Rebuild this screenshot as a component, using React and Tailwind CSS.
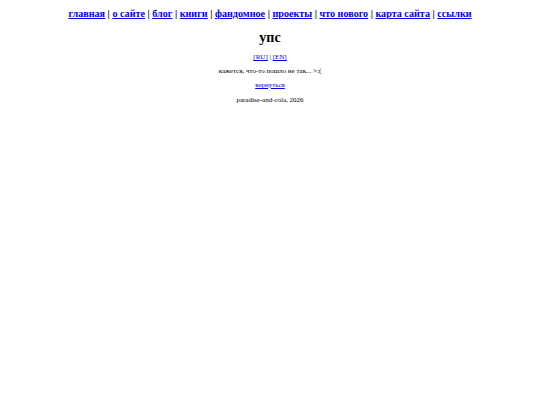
const links = [
  "главная",
  "о сайте",
  "блог",
  "книги",
  "фандомное",
  "проекты",
  "что нового",
  "карта сайта",
  "ссылки",
];

export default function App() {
  return (
    <div className="min-h-[405px] bg-white text-black text-center font-['Liberation_Serif',serif]">
      <nav className="pt-[7px] text-[10.15px] font-bold leading-[14px]">
        {links.map((l, i) => (
          <span key={l}>
            {i > 0 && " | "}
            <a href="#" className="text-[#0000ee] underline">
              {l}
            </a>
          </span>
        ))}
      </nav>
      <h1 className="mt-[8px] text-[14px] font-bold leading-[18px]">упс</h1>
      <div className="mt-[6px] text-[7px] leading-[9px]">
        <p className="text-[#0000ee]">
          <a href="#" className="underline">[RU]</a>
          <span className="text-black"> | </span>
          <a href="#" className="underline">[EN]</a>
        </p>
        <p className="mt-[5px]">кажется, что-то пошло не так... &gt;:(</p>
        <p className="mt-[5px]">
          <a href="#" className="text-[#0000ee] underline">вернуться</a>
        </p>
        <p className="mt-[6px]">paradise-and-cola, 2026</p>
      </div>
    </div>
  );
}
